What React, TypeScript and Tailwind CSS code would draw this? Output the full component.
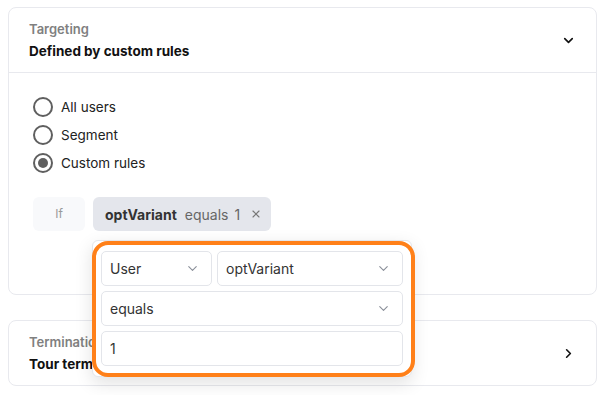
import { ChevronDown, ChevronRight, X } from 'lucide-react'

function Radio({ label, checked }: { label: string; checked?: boolean }) {
  return (
    <label className="flex h-[28px] items-center gap-2">
      <span className="flex h-[20px] w-[20px] items-center justify-center rounded-full border-2 border-[#5f5f5f]">
        {checked && <span className="h-[10px] w-[10px] rounded-full bg-[#5f5f5f]" />}
      </span>
      <span className="text-[13.5px] text-[#222]">{label}</span>
    </label>
  )
}

function CardHeader({ title, value, open }: { title: string; value: string; open?: boolean }) {
  return (
    <div className="flex items-center justify-between py-[10px] pl-5 pr-[20px]">
      <div className="leading-[22px]">
        <div className="text-[13px] font-semibold text-[#808080]">{title}</div>
        <div className="text-[13.5px] font-bold text-[#111]">{value}</div>
      </div>
      {open ? (
        <ChevronDown size={15} strokeWidth={2.6} className="text-[#111]" />
      ) : (
        <ChevronRight size={15} strokeWidth={2.6} className="text-[#111]" />
      )}
    </div>
  )
}

function Select({ value, className }: { value: string; className?: string }) {
  return (
    <div
      className={`flex h-[35px] items-center justify-between rounded-[5px] border border-[#e3e5ea] bg-white pl-[8px] pr-[11px] ${className ?? ''}`}
    >
      <span className="text-[14px] text-[#333]">{value}</span>
      <ChevronDown size={15} strokeWidth={1.8} className="text-[#8a8f99]" />
    </div>
  )
}

export default function App() {
  return (
    <div
      className="relative h-[395px] w-[610px] bg-white pl-2 pr-[13px] pt-[7px]"
      style={{ fontFamily: 'Inter, "Noto Sans", sans-serif' }}
    >
      <div className="rounded-lg border border-[#e8e9ee] bg-white">
        <CardHeader title="Targeting" value="Defined by custom rules" open />
        <div className="border-t border-[#e8e9ee] pb-[63px] pl-6 pt-[20px]">
          <Radio label="All users" />
          <Radio label="Segment" />
          <Radio label="Custom rules" checked />
          <div className="mt-[20px] flex gap-2">
            <div className="flex h-[34px] w-[52px] items-center justify-center rounded-md bg-[#f8f9fb] text-[12px] text-[#9a9a9a]">
              If
            </div>
            <div className="flex h-[34px] w-[178px] items-center rounded-md bg-[#e4e6ec] pl-3 text-[14px]">
              <span className="font-bold text-[#333]">optVariant</span>
              <span className="ml-[8px] text-[#666]">equals</span>
              <span className="ml-[6px] text-[#666]">1</span>
              <X size={12} strokeWidth={2.2} className="ml-[10px] text-[#777]" />
            </div>
          </div>
        </div>
      </div>

      <div className="mt-[25px] rounded-lg border border-[#e8e9ee] bg-white">
        <CardHeader title="Termination" value="Tour termination rules" />
      </div>

      <div className="absolute left-[92px] top-[240px] h-[137px] w-[320px] rounded-md border border-[#e3e5ea] bg-white shadow-[0_6px_18px_rgba(0,0,0,0.12)]" />
      <div className="absolute left-[92px] top-[241px] flex h-[136px] w-[323px] flex-col gap-[5px] rounded-[16px] border-4 border-[#ff8019] pb-[7px] pl-[5px] pr-[8px] pt-[6px]">
        <div className="flex gap-[5px]">
          <Select value="User" className="w-[111px]" />
          <Select value="optVariant" className="flex-1" />
        </div>
        <Select value="equals" />
        <div className="flex h-[35px] items-center rounded-[5px] border border-[#e3e5ea] bg-white pl-[8px] text-[14px] text-[#333]">
          1
        </div>
      </div>
    </div>
  )
}
